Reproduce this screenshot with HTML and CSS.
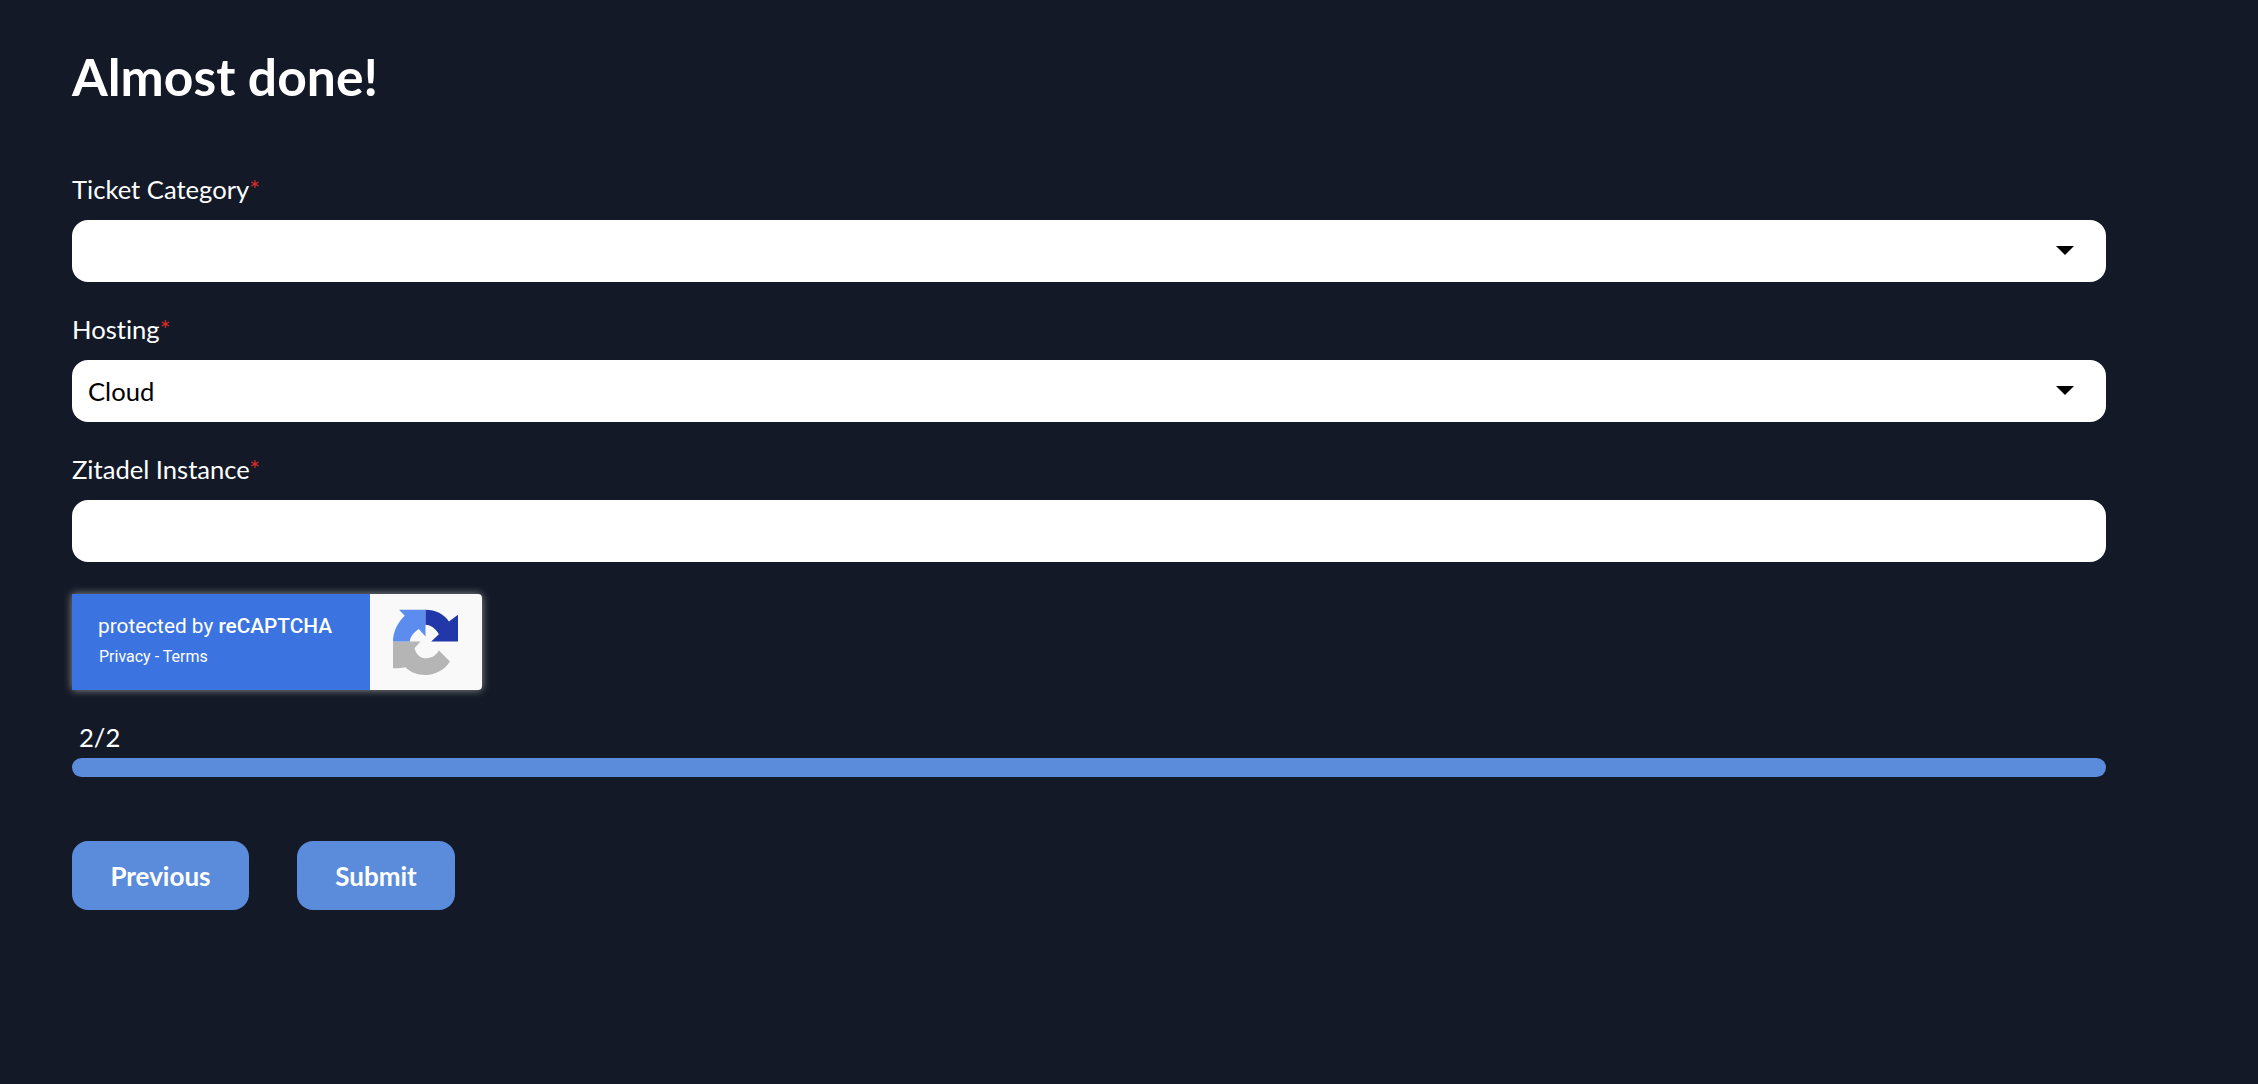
FILE: index.html
```html
<!DOCTYPE html>
<html lang="en">
<head>
<meta charset="utf-8">
<title>Almost done!</title>
<link rel="stylesheet" href="styles.css">
</head>
<body>
<main class="form">
  <h1 class="title">Almost done!</h1>
  <div class="field">
    <label class="label">Ticket Category<span class="req">*</span></label>
    <div class="control select">
      <span></span>
      <svg class="caret" viewBox="0 0 18 9" width="18" height="9"><path d="M0 0h18L9 9z"/></svg>
    </div>
  </div>
  <div class="field">
    <label class="label">Hosting<span class="req">*</span></label>
    <div class="control select">
      <span>Cloud</span>
      <svg class="caret" viewBox="0 0 18 9" width="18" height="9"><path d="M0 0h18L9 9z"/></svg>
    </div>
  </div>
  <div class="field">
    <label class="label">Zitadel Instance<span class="req">*</span></label>
    <input class="control" type="text">
  </div>
  <div class="recaptcha">
    <div class="rc-text">
      <div class="rc-main">protected by <b>reCAPTCHA</b></div>
      <div class="rc-links">Privacy - Terms</div>
    </div>
    <div class="rc-logo">
      <svg viewBox="98 58 194 197" width="65" height="66">
        <path fill="#b5b5b5" d="M98 155H180L162 175C168 195 180 205 197 205C215 205 228 195 235 182L268 215C252 240 225 255 195 255C170 255 150 247 135 232L115 235L98 235Z"/>
        <path fill="#5b8cee" d="M98 155C98 125 112 98 133 78L116 60H195V140L175 118C160 128 150 140 148 155Z"/>
        <path fill="#2238a8" d="M195 60C225 60 250 73 265 95L292 75V155H212L235 133C226 117 212 106 195 105Z"/>
      </svg>
    </div>
  </div>
  <div class="progress">
    <div class="progress-label">2/2</div>
    <div class="progress-bar"></div>
  </div>
  <div class="actions">
    <button class="btn" type="button">Previous</button>
    <button class="btn" type="button">Submit</button>
  </div>
</main>
</body>
</html>
```
FILE: styles.css
```css
* { box-sizing: border-box; }
html, body { margin: 0; height: 100%; }
body {
  background: #131926;
  color: #fff;
  font-family: Lato, "Liberation Sans", sans-serif;
  font-variant-ligatures: none;
  overflow: hidden;
}
.form {
  width: 2106px;
  padding: 45px 0 0 72px;
  display: flex;
  flex-direction: column;
}
.title {
  margin: 0 0 66px;
  font-size: 51.6px;
  line-height: 62px;
  font-weight: 700;
}
.field {
  display: flex;
  flex-direction: column;
  margin-bottom: 31px;
}
.label {
  font-size: 25.6px;
  line-height: 32px;
  margin-bottom: 15px;
}
.req {
  color: #d92b2b;
  font-size: 25.6px;
  line-height: 0;
}
.control {
  display: flex;
  align-items: center;
  justify-content: space-between;
  width: 100%;
  height: 62px;
  padding: 0 32px 0 16px;
  border: 0;
  border-radius: 16px;
  background: #fff;
  color: #000;
  font-family: inherit;
  font-size: 25.6px;
}
.caret { display: block; fill: #000; margin-top: -1px; }
.recaptcha {
  display: flex;
  width: 410px;
  height: 96px;
  margin-top: 1px;
  border-radius: 0 4px 4px 0;
  overflow: hidden;
  box-shadow: 0 0 8px rgba(190, 190, 190, 0.75);
  flex: none;
}
.rc-text {
  width: 298px;
  background: #3b73e0;
  font-family: Roboto, "Liberation Sans", sans-serif;
  padding: 20px 0 0 26px;
}
.rc-main { font-size: 20.8px; line-height: 24px; }
.rc-main b { font-weight: 500; }
.rc-links { font-size: 16px; line-height: 20px; margin: 9px 0 0 1px; }
.rc-logo {
  flex: 1;
  background: #f9f9f9;
  display: flex;
  align-items: center;
  justify-content: center;
  padding-right: 2px;
}
.progress { margin-top: 32px; }
.progress-label {
  font-size: 25.6px;
  line-height: 30px;
  padding-left: 7px;
  margin-bottom: 6px;
}
.progress-bar {
  height: 19px;
  border-radius: 10px;
  background: #5b8cdb;
}
.actions {
  display: flex;
  gap: 48px;
  margin-top: 64px;
}
.btn {
  height: 69px;
  padding: 0 38.4px;
  border: 0;
  border-radius: 16px;
  background: #5b8cdb;
  color: #fff;
  font-family: inherit;
  font-size: 26px;
  font-weight: 700;
}
```
